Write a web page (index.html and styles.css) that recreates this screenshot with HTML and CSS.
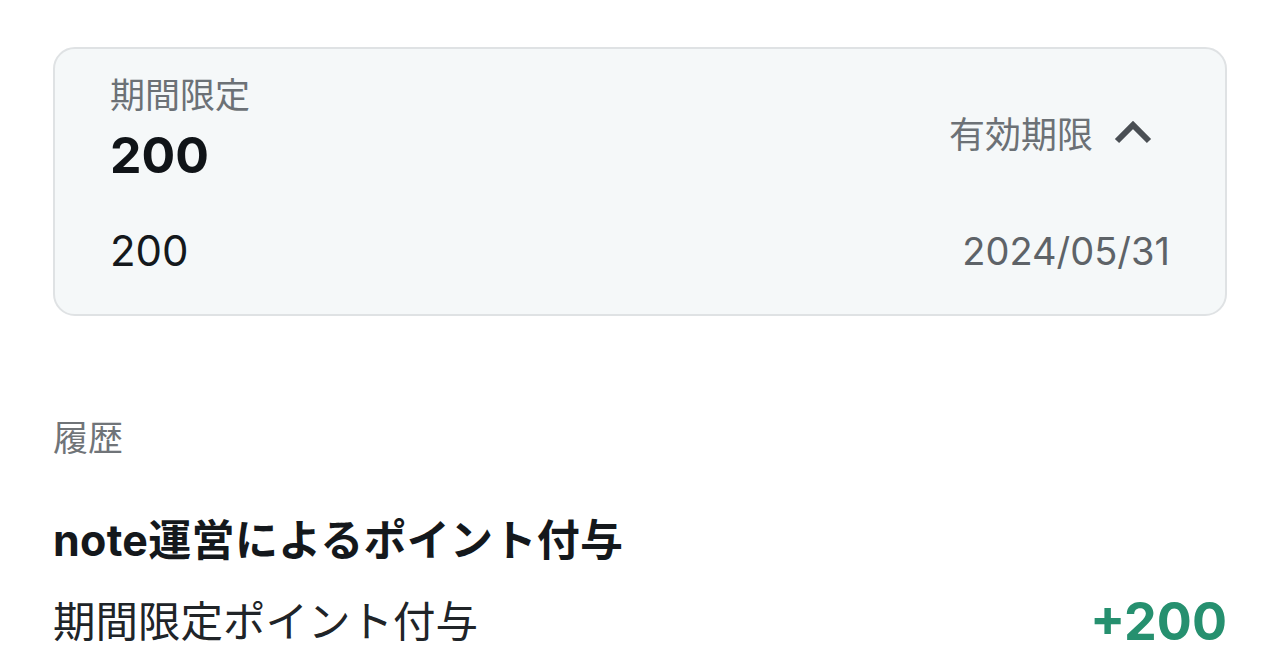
FILE: index.html
```html
<!DOCTYPE html>
<html lang="ja">
<head>
<meta charset="utf-8">
<link rel="stylesheet" href="styles.css">
</head>
<body>
<div class="page">
  <section class="card">
    <div class="card-head">
      <div class="head-left">
        <div class="label">期間限定</div>
        <div class="total">200</div>
      </div>
      <div class="head-right">
        <span class="expiry-label">有効期限</span>
        <svg class="chev" width="40" height="26" viewBox="0 0 40 26"><path d="M4 22 L20 6 L36 22" fill="none" stroke="#4a4f54" stroke-width="6" stroke-linejoin="miter" stroke-linecap="butt"/></svg>
      </div>
    </div>
    <div class="card-row">
      <span class="amount">200</span>
      <span class="date">2024/05/31</span>
    </div>
  </section>
  <div class="history-title">履歴</div>
  <div class="item">
    <div class="item-title">note運営によるポイント付与</div>
    <div class="item-row">
      <span class="item-desc">期間限定ポイント付与</span>
      <span class="item-value">+200</span>
    </div>
  </div>
</div>
</body>
</html>
```

FILE: styles.css
```css
html, body {
  margin: 0;
  padding: 0;
  background: #ffffff;
}
body {
  font-family: Inter, "Noto Sans CJK JP", sans-serif;
  color: #14181c;
}
.page {
  padding: 47px 53px 0 53px;
}
.card {
  box-sizing: border-box;
  height: 269px;
  background: #f5f8f9;
  border: 2px solid #dfe2e4;
  border-radius: 22px;
  padding: 22px 55px 0 55px;
}
.card-head {
  display: flex;
  justify-content: space-between;
  align-items: center;
}
.label {
  font-size: 35px;
  line-height: 48px;
  color: #6c7176;
}
.total {
  font-size: 50px;
  font-weight: 700;
  line-height: 60px;
  margin-top: 6px;
  color: #101418;
}
.head-right {
  display: flex;
  align-items: center;
  gap: 20px;
  padding-right: 17px;
  margin-top: 8px;
}
.expiry-label {
  font-size: 36px;
  color: #6c7176;
}
.chev {
  display: block;
}
.card-row {
  display: flex;
  justify-content: space-between;
  align-items: center;
  margin-top: 40px;
}
.amount {
  font-size: 42px;
  color: #14181c;
}
.date {
  font-size: 38px;
  color: #5e6368;
}
.history-title {
  margin-top: 98px;
  font-size: 35px;
  color: #707478;
  line-height: 48px;
}
.item {
  margin-top: 50px;
}
.item-title {
  font-size: 43px;
  font-weight: 700;
  line-height: 56px;
  letter-spacing: 0.3px;
  color: #14181c;
}
.item-row {
  display: flex;
  justify-content: space-between;
  align-items: center;
  margin-top: 16px;
}
.item-desc {
  font-size: 42.5px;
  color: #202428;
}
.item-value {
  font-size: 52px;
  font-weight: 700;
  color: #26906f;
  margin-top: 6px;
}
```
